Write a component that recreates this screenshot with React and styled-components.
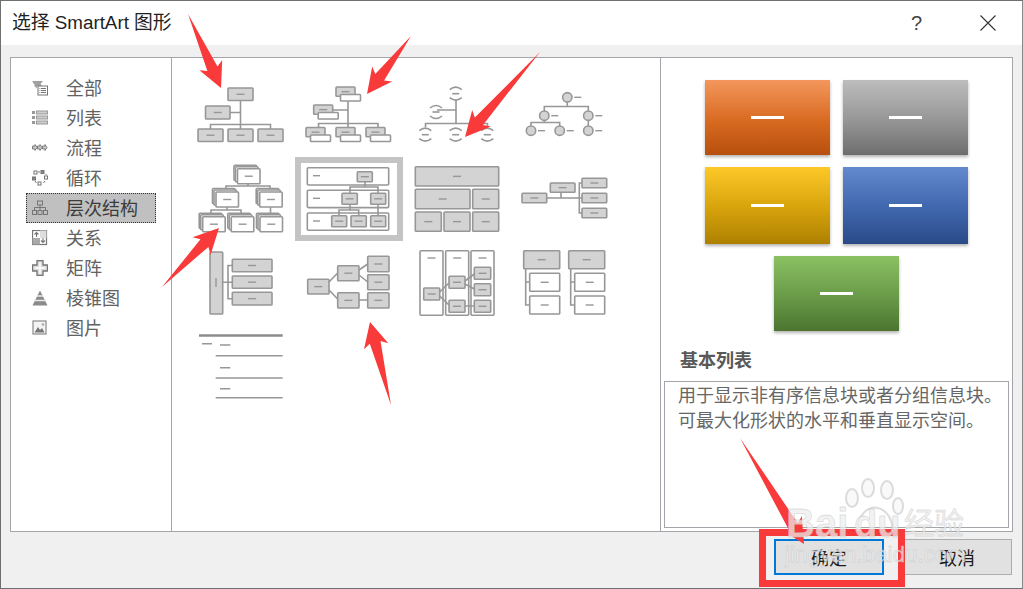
import React from 'react'
import styled, { createGlobalStyle } from 'styled-components'

const Global = createGlobalStyle`
  html, body { margin: 0; padding: 0; background: #f0f0f0; }
  body { font-family: "Liberation Sans", "Noto Sans CJK SC", sans-serif; }
  * { box-sizing: border-box; }
`

const Dialog = styled.div`
  position: relative;
  width: 1023px;
  height: 589px;
  display: flex;
  flex-direction: column;
  border: 1px solid #6f6f6f;
  border-right-color: #8a8a8a;
  background: #f0f0f0;
  overflow: hidden;
`
const TitleBar = styled.header`
  height: 44px;
  background: #fff;
  display: flex;
  align-items: center;
  padding: 0 26px 0 11px;
  color: #1f1f1f;
`
const Title = styled.h1`
  flex: 1;
  margin: 0;
  font-size: 18.8px;
  font-weight: 400;
  line-height: 24px;
`
const HelpMark = styled.span`
  font-size: 20px;
  color: #444;
  margin-right: 58px;
  line-height: 24px;
`
const Panel = styled.main`
  height: 475px;
  margin: 12px 9px 0;
  display: flex;
  background: #fff;
  border: 1px solid #a3a5ab;
`
const Nav = styled.ul`
  width: 161px;
  flex: none;
  list-style: none;
  margin: 0;
  padding: 15px 0 0 15px;
  border-right: 1px solid #a3a5ab;
`
const NavItem = styled.li`
  width: 130px;
  height: 30px;
  display: flex;
  align-items: center;
  gap: 18px;
  padding-left: 6px;
  font-size: 18px;
  color: ${p => (p.$active ? '#3c3c3c' : '#626262')};
  background: ${p => (p.$active ? '#c0c0c0' : 'transparent')};
  outline: ${p => (p.$active ? '1px dotted #333' : 'none')};
  outline-offset: -1px;
`
const NavLabel = styled.span`
  display: block;
  line-height: 24px;
  padding-top: 2px;
`
const Gallery = styled.section`
  width: 489px;
  flex: none;
  display: grid;
  grid-template-columns: repeat(4, 108px);
  grid-auto-rows: 84px;
  column-gap: 3px;
  row-gap: 2px;
  align-content: start;
  padding: 13px 0 0 12px;
  border-right: 1px solid #a3a5ab;
`
const ThumbSvg = styled.svg`
  display: block;
  width: 108px;
  height: 84px;
  filter: blur(0.3px);
`
const Preview = styled.aside`
  flex: 1;
  padding-top: 22px;
  display: flex;
  flex-direction: column;
`
const Swatches = styled.div`
  width: 263px;
  margin-left: 44px;
  display: flex;
  flex-wrap: wrap;
  justify-content: center;
  gap: 12px 13px;
`
const Swatch = styled.div`
  width: 125px;
  height: ${p => p.$h}px;
  display: flex;
  align-items: center;
  justify-content: center;
  background: linear-gradient(${p => p.$from}, ${p => p.$mid} 55%, ${p => p.$to});
  box-shadow: 0 2px 3px rgba(0, 0, 0, 0.3);
`
const SwatchDash = styled.span`
  width: 33px;
  height: 3px;
  background: #fff;
`
const LayoutName = styled.h2`
  margin: 18px 0 0 19px;
  font-size: 18px;
  font-weight: 700;
  line-height: 24px;
  color: #595959;
`
const Description = styled.p`
  margin: 8px 3px 0;
  width: 345px;
  height: 147px;
  padding: 2px 0 0 13px;
  border: 1px solid #a3a5ab;
  font-size: 18px;
  line-height: 25px;
  color: #666;
  white-space: nowrap;
`
const Footer = styled.footer`
  display: flex;
  justify-content: flex-end;
  gap: 18px;
  padding: 7px 10px 0 0;
`
const Button = styled.button`
  width: 110px;
  height: 36px;
  padding: 0;
  font: inherit;
  font-size: 18px;
  color: #1a1a1a;
  background: #e1e1e1;
  border: ${p => (p.$primary ? '2px solid #0078d7' : '1px solid #adadad')};
`
const Overlay = styled.svg`
  position: absolute;
  left: -1px;
  top: -1px;
  width: 1023px;
  height: 589px;
  pointer-events: none;
`
const Watermark = styled.text`
  fill: rgba(238, 238, 238, 0.72);
  stroke: rgba(190, 190, 190, 0.45);
  stroke-width: 0.8px;
  font-family: "Liberation Sans", "Noto Sans CJK SC", sans-serif;
  font-size: ${p => p.$size}px;
  font-weight: ${p => p.$weight || 400};
`

const STROKE = '#979797'
const FILL = '#d3d3d3'
const SW = 1.6

// x, y, w, h in page coordinates, the viewBox of each thumb moves them in place
const Bx = ({ x, y, w, h, white, r = 0.8, noDash }) => (
  <g>
    <rect x={x} y={y} width={w} height={h} rx={r} fill={white ? '#fff' : FILL} stroke={STROKE} strokeWidth={SW} />
    {!noDash && (
      <path d={`M${x + w / 2 - 4} ${y + h / 2}h8`} stroke={STROKE} strokeWidth="1.4" />
    )}
  </g>
)

const Ln = ({ d, w = SW, c = STROKE }) => <path d={d} fill="none" stroke={c} strokeWidth={w} />

const ArcNode = ({ x, y }) => (
  <g fill="none" stroke={STROKE} strokeWidth={SW}>
    <path d={`M${x - 6} ${y - 4}q6 -5 12 0`} />
    <path d={`M${x - 6} ${y + 4}q6 5 12 0`} />
    <path d={`M${x - 3.5} ${y}h7`} />
  </g>
)

const Dot = ({ x, y }) => (
  <g>
    <circle cx={x} cy={y} r="4.7" fill={FILL} stroke={STROKE} strokeWidth={SW} />
    <path d={`M${x + 7} ${y}h7`} stroke={STROKE} strokeWidth="1.4" />
  </g>
)

const Stack = ({ x, y }) => (
  <g>
    <Bx x={x - 3.5} y={y - 3.5} w={22.5} h={15} white noDash />
    <Bx x={x - 2} y={y - 2} w={22.5} h={15} white noDash />
    <Bx x={x} y={y} w={22.5} h={15} white />
  </g>
)

const Pair = ({ x, y }) => (
  <g>
    <Bx x={x} y={y} w={19} h={9.3} />
    <Bx x={x + 4.5} y={y + 7.5} w={20} h={6.5} white noDash />
  </g>
)

const thumbs = [
  <>
    <Ln d="M240.5 100V129M229.5 112.5H240.5M210.5 129V124.5H270.5V129" />
    <Bx x={228} y={88} w={25} h={12.5} />
    <Bx x={205.5} y={106} w={24.5} h={13} />
    <Bx x={198} y={129} w={25} h={12.5} />
    <Bx x={228} y={129} w={25} h={12.5} />
    <Bx x={258} y={129} w={25} h={12.5} />
  </>,
  <>
    <Ln d="M348 100V127M332 110H348M318.5 127V123.5H378V127" />
    <Pair x={336} y={87} />
    <Pair x={313.7} y={105} />
    <Pair x={306} y={127.5} />
    <Pair x={336} y={127.5} />
    <Pair x={366} y={127.5} />
  </>,
  <>
    <Ln d="M456 100V124M437 110H456M425.5 127V123.5H487.5V127" />
    <ArcNode x={455.7} y={93.7} />
    <ArcNode x={436} y={112} />
    <ArcNode x={425.3} y={134.7} />
    <ArcNode x={455.7} y={134.7} />
    <ArcNode x={487.3} y={134.7} />
  </>,
  <>
    <Ln d="M567.3 102V106.5M544.3 111V106.5H588.3V111M544.3 120V122.5M531 126V122.5H559.7V126M588.3 120V126" />
    <Dot x={567.3} y={97.3} />
    <Dot x={544.3} y={115.7} />
    <Dot x={588.3} y={115.7} />
    <Dot x={531} y={130.7} />
    <Dot x={559.7} y={130.7} />
    <Dot x={588.3} y={130.7} />
  </>,
  <>
    <Ln d="M248 184V186H226V192M248 186H270V192M227 207V210H211V217M227 210H241V217M270.5 207V217" />
    <Stack x={237.5} y={168.7} />
    <Stack x={216} y={192} />
    <Stack x={259.7} y={192} />
    <Stack x={202.7} y={216.7} />
    <Stack x={231.3} y={216.7} />
    <Stack x={260} y={216.7} />
  </>,
  <>
    <rect x="298" y="160" width="102" height="78" fill="#fff" stroke="#c4c4c4" strokeWidth="6" />
    {[167.7, 190.3, 213].map(y => (
      <g key={y}>
        <rect x="307.3" y={y} width="81.4" height="17.3" rx="1" fill="#fff" stroke={STROKE} strokeWidth={SW} />
        <path d={`M313 ${y + 8}h7`} stroke={STROKE} strokeWidth="1.4" />
      </g>
    ))}
    <Ln d="M365 181.7V187H350V193.5M365 187H378V193.5M350 204.5V210H339V216M350 210H358.7V216M378 204.5V216" />
    <Bx x={357.3} y={171.7} w={15} h={10} />
    <Bx x={342} y={193.3} w={15.3} h={11} />
    <Bx x={370.7} y={193.3} w={15} h={11} />
    <Bx x={331.7} y={215.7} w={15} h={11} />
    <Bx x={351} y={215.7} w={15.3} h={11} />
    <Bx x={370.7} y={215.7} w={15} h={11} />
  </>,
  <>
    <Bx x={415.3} y={166.7} w={83.4} h={19.3} />
    <Bx x={415.3} y={189.3} w={54.7} h={19.4} />
    <Bx x={472.7} y={189.3} w={26} h={19.4} />
    <Bx x={415.3} y={212} w={26} h={19.3} />
    <Bx x={444} y={212} w={26} h={19.3} />
    <Bx x={472.7} y={212} w={26} h={19.3} />
  </>,
  <>
    <Ln d="M546.7 198H579.3M561 192.3V198M582 183H579.3V213H582M579.3 198H582" />
    <Bx x={522} y={193.3} w={24.7} h={9.4} />
    <Bx x={550.3} y={183} w={24.7} h={9.3} />
    <Bx x={582} y={178.3} w={24.7} h={9.4} />
    <Bx x={582} y={193.3} w={24.7} h={9.4} />
    <Bx x={582} y={208.3} w={24.7} h={9.4} />
  </>,
  <>
    <Ln d="M222.7 282.3H232.3M232.3 265.5H228V298.7H232.3" />
    <rect x="210" y="252" width="12.7" height="62" rx="0.8" fill={FILL} stroke={STROKE} strokeWidth={SW} />
    <path d="M216 278v9" stroke={STROKE} strokeWidth="1.4" />
    <Bx x={232.3} y={259.3} w={39.7} h={12.4} />
    <Bx x={232.3} y={276} w={39.7} h={12.3} />
    <Bx x={232.3} y={292.3} w={39.7} h={12.7} />
  </>,
  <>
    <Ln d="M329 282L337.7 273M329 290L337.7 299M359 270L367.7 264M359 275L367.7 282M359 300H367.7" />
    <Bx x={307.7} y={279.3} w={21.3} h={14.7} />
    <Bx x={337.7} y={265.7} w={21.3} h={15} />
    <Bx x={337.7} y={292.7} w={21.3} h={15.3} />
    <Bx x={367.7} y={256.3} w={21.3} h={15.4} />
    <Bx x={367.7} y={274.7} w={21.3} h={15} />
    <Bx x={367.7} y={292.7} w={21.3} h={15.3} />
  </>,
  <>
    {[420, 445.7, 471].map(x => (
      <g key={x}>
        <rect x={x} y="250.7" width="23" height="64.6" rx="1" fill="#fff" stroke={STROKE} strokeWidth={SW} />
        <path d={`M${x + 7.5} 258h8`} stroke={STROKE} strokeWidth="1.4" />
      </g>
    ))}
    <Ln d="M439.7 292L449 283M439.7 296L449 305M465 281L474.3 274M465 284L474.3 289M465 306H474.3" />
    <Bx x={423.7} y={288} w={16} h={12} />
    <Bx x={449} y={276.3} w={16} h={12} />
    <Bx x={449} y={300.3} w={16} h={12} />
    <Bx x={474.3} y={267.3} w={16.4} h={12} />
    <Bx x={474.3} y={283.7} w={16.4} h={12} />
    <Bx x={474.3} y={300.3} w={16.4} h={12} />
  </>,
  <>
    <Ln d="M525.7 268V305H529.7M525.7 282H529.7M570.7 268V305H574.7M570.7 282H574.7" />
    <Bx x={523.7} y={250.7} w={36} h={18} />
    <Bx x={568.7} y={250.7} w={36} h={18} />
    <Bx x={529.7} y={273.3} w={30} h={18} white />
    <Bx x={529.7} y={296} w={30} h={18} white />
    <Bx x={574.7} y={273.3} w={30} h={18} white />
    <Bx x={574.7} y={296} w={30} h={18} white />
  </>,
  <>
    <Ln d="M199 335.5H282.7" w={2.6} c="#8c8c8c" />
    <Ln d="M202 343.7H212M220 345H230.3M215.7 355.7H282.7M220 367.7H230.3M215.7 378H282.7M220 388.7H230.3M215.7 397.7H282.7" />
  </>,
]

// top left corner of the cell each thumbnail sits in
const thumbOrigin = i => [184 + (i % 4) * 111, 71 + Math.floor(i / 4) * 86]

const NavIcon = ({ children }) => (
  <svg width="16" height="16" viewBox="0 0 16 16" fill="none" stroke="#757575" strokeWidth="1" style={{ flex: 'none' }}>
    {children}
  </svg>
)

const navItems = [
  ['全部', <><path d="M0.5 1H11L8.5 4L10 6H5V8.5L3 6.5H2.5V4.5L0.5 2Z" fill="#a0a0a0" stroke="none" /><rect x="6" y="6" width="9.5" height="9" fill="#fff" /><path d="M9 8.5h5M9 10.5h5M9 12.5h5M7.5 8.5h.8M7.5 10.5h.8M7.5 12.5h.8" /></>],
  ['列表', <><path d="M0 2.5h3M0 7.500h3M0 12.500h3" strokeWidth="3" stroke="#999" /><rect x="4.500" y="1" width="11" height="3" fill="#ccc" stroke="#999" /><rect x="4.500" y="6" width="11" height="3" fill="#ccc" stroke="#999" /><rect x="4.500" y="11" width="11" height="3" fill="#ccc" stroke="#999" /></>],
  ['流程', <><path d="M0.500 6h2.500v-1.500l2 3-2 3v-1.500h-2.500zM5.500 6h2.500v-1.500l2 3-2 3v-1.500h-2.500zM10.500 6h2.500v-1.500l2 3-2 3v-1.500h-2.500z" fill="#c8c8c8" strokeWidth="0.9" /></>],
  ['循环', <><rect x="2" y="1" width="3" height="3" /><rect x="9" y="0.500" width="3" height="3" fill="#888" /><rect x="12.500" y="6" width="3" height="3" /><rect x="6" y="12" width="3" height="3" /><rect x="0.500" y="7" width="3" height="3" fill="#888" /><path d="M6 2h2M14 4v1M11.500 13l1.500-2M3 11l1.500 2" /></>],
  ['层次结构', <><rect x="5.500" y="1" width="5" height="4" /><rect x="0.500" y="10.500" width="4" height="4" /><rect x="6" y="10.500" width="4" height="4" /><rect x="11.500" y="10.500" width="4" height="4" /><path d="M8 5v5.500M2.500 10.500v-3h11v3" /></>],
  ['关系', <><rect x="0.500" y="0.500" width="14" height="14" fill="#fff" strokeWidth="1.2" /><path d="M0.500 8H8V14.500H0.500z" fill="#aaa" stroke="none" /><path d="M8 0.500H14.500V8H8z" fill="#ddd" stroke="none" /><path d="M4.500 7V2.500M2.500 4.500l2-2 2 2M11 8v4.500M9 10.500l2 2 2-2" strokeWidth="1.1" /></>],
  ['矩阵', <><path d="M5 0.500h6v4.500h4.500v6h-4.500v4.500h-6v-4.500h-4.500v-6h4.500z" fill="#d8d8d8" strokeWidth="1.300" strokeLinejoin="round" /><path d="M8 2.500v11M2.500 8h11" stroke="#fff" strokeWidth="1.600" /></>],
  ['棱锥图', <><path d="M8 0.500L15.500 15.500H0.500Z" fill="#8a8a8a" stroke="none" /><path d="M4.500 6h7M2.500 10.500h11" stroke="#e8e8e8" strokeWidth="1.400" /></>],
  ['图片', <><rect x="1" y="1" width="13" height="13" fill="#f4f4f4" stroke="#8a8a8a" strokeWidth="1.200" /><path d="M2.500 12.500L6 7L8 10L10 8L12.500 12.500Z" fill="#777" stroke="none" /><circle cx="11" cy="4.500" r="1.300" fill="#aaa" stroke="none" /></>],
]

const swatches = [
  { from: '#f3975d', mid: '#d86a20', to: '#b6500e', h: 75 },
  { from: '#bdbdbd', mid: '#959595', to: '#6e6e6e', h: 75 },
  { from: '#fdc928', mid: '#d5a20c', to: '#ae8000', h: 77 },
  { from: '#6389cf', mid: '#3f66ac', to: '#2a4a87', h: 77 },
  { from: '#8bc063', mid: '#689a47', to: '#4c7530', h: 75 },
]

// pointed tail that widens up to an arrow head
const arrowPoints = (tx, ty, hx, hy, len = 25, head = 25, shaft = 11) => {
  const d = Math.hypot(hx - tx, hy - ty)
  const ux = (hx - tx) / d
  const uy = (hy - ty) / d
  const nx = -uy
  const ny = ux
  const bx = hx - ux * len
  const by = hy - uy * len
  const sx = bx + ux * 4
  const sy = by + uy * 4
  const p = [
    [tx, ty],
    [sx + (nx * shaft) / 2, sy + (ny * shaft) / 2],
    [bx + (nx * head) / 2, by + (ny * head) / 2],
    [hx, hy],
    [bx - (nx * head) / 2, by - (ny * head) / 2],
    [sx - (nx * shaft) / 2, sy - (ny * shaft) / 2],
  ]
  return p.map(q => q.map(v => v.toFixed(1)).join(',')).join(' ')
}

const arrows = [
  [188, 14, 221, 88],
  [411, 36, 367, 94],
  [540, 52, 465, 137],
  [162, 287, 219, 228],
  [391, 405, 370, 322],
  [740, 438, 804, 544],
]

export default function App() {
  return (
    <Dialog>
      <Global />
      <TitleBar>
        <Title>选择 SmartArt 图形</Title>
        <HelpMark>?</HelpMark>
        <svg width="16" height="16" viewBox="0 0 16 16" stroke="#333" strokeWidth="1.1">
          <path d="M0.500 0.500L15.500 15.500M15.500 0.500L0.500 15.500" />
        </svg>
      </TitleBar>
      <Panel>
        <Nav>
          {navItems.map(([label, icon]) => (
            <NavItem key={label} $active={label === '层次结构'}>
              <NavIcon>{icon}</NavIcon>
              <NavLabel>{label}</NavLabel>
            </NavItem>
          ))}
        </Nav>
        <Gallery>
          {thumbs.map((t, i) => {
            const [x, y] = thumbOrigin(i)
            return (
              <ThumbSvg key={i} viewBox={`${x} ${y} 108 84`}>
                {t}
              </ThumbSvg>
            )
          })}
        </Gallery>
        <Preview>
          <Swatches>
            {swatches.map(s => (
              <Swatch key={s.from} $from={s.from} $mid={s.mid} $to={s.to} $h={s.h}>
                <SwatchDash />
              </Swatch>
            ))}
          </Swatches>
          <LayoutName>基本列表</LayoutName>
          <Description>
            用于显示非有序信息块或者分组信息块。
            <br />
            可最大化形状的水平和垂直显示空间。
          </Description>
        </Preview>
      </Panel>
      <Footer>
        <Button $primary>确定</Button>
        <Button>取消</Button>
      </Footer>
      <Overlay viewBox="0 0 1023 589">
        {arrows.map(a => (
          <polygon key={a.join()} points={arrowPoints(...a)} fill="#f83a3a" />
        ))}
        <rect x="762.500" y="532.500" width="139" height="51" fill="none" stroke="#f83a3a" strokeWidth="7" />
        <g fill="rgba(245,245,245,0.6)" stroke="rgba(205,205,205,0.7)" strokeWidth="2">
          <ellipse cx="852" cy="498" rx="6" ry="9" />
          <ellipse cx="868" cy="488" rx="6" ry="9" />
          <ellipse cx="887" cy="490" rx="6" ry="9" />
          <ellipse cx="898" cy="506" rx="5" ry="8" />
          <path d="M858 531c-2-14 10-26 20-23c8 2 16 12 14 23" fill="none" />
        </g>
        <Watermark x="786" y="537" $size={40} $weight={700}>Bai</Watermark>
        <Watermark x="854" y="537" $size={38} $weight={700}>du</Watermark>
        <Watermark x="904" y="534" $size={30}>经验</Watermark>
        <Watermark x="785" y="562" $size={22.500}>jingyan.baidu.com</Watermark>
      </Overlay>
    </Dialog>
  )
}
